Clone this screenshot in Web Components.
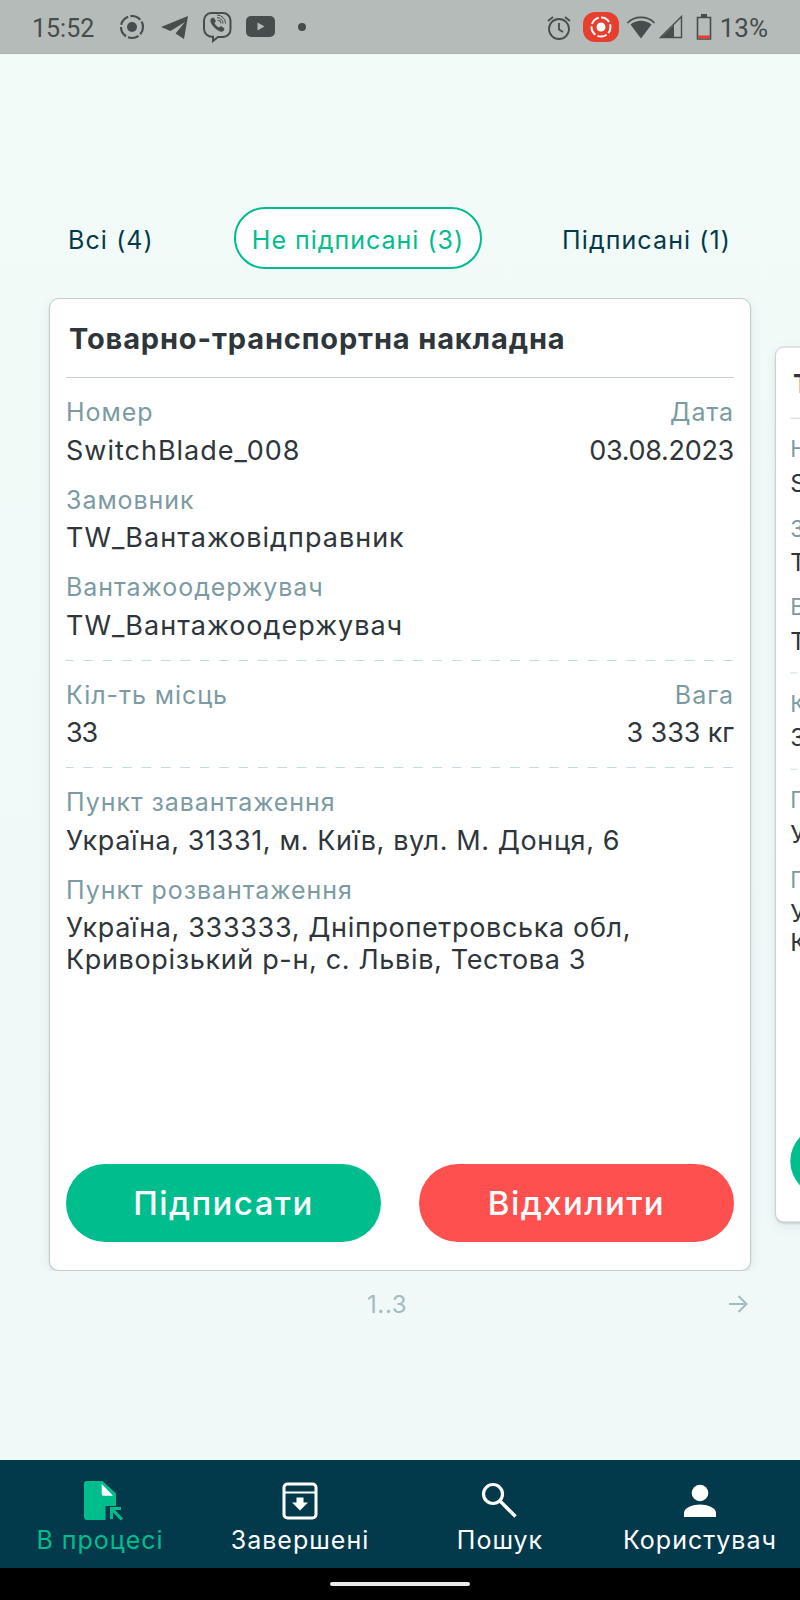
<!DOCTYPE html>
<html lang="uk">
<head>
<meta charset="utf-8">
<title>Накладні</title>
<style>
  html, body { margin: 0; padding: 0; }
  body { font-family: Inter, "Liberation Sans", sans-serif; }
</style>
</head>
<body>
<app-shell>
  <status-bar slot="top"></status-bar>
  <filter-tabs>
    <filter-tab>Всі (4)</filter-tab>
    <filter-tab active>Не підписані (3)</filter-tab>
    <filter-tab>Підписані (1)</filter-tab>
  </filter-tabs>
  <doc-carousel>
    <doc-card>
      <doc-pair><doc-field label="Номер">SwitchBlade_008</doc-field><doc-field end label="Дата" style="--ls:-.3px">03.08.2023</doc-field></doc-pair>
      <doc-field label="Замовник">TW_Вантажовідправник</doc-field>
      <doc-field label="Вантажоодержувач">TW_Вантажоодержувач</doc-field>
      <dash-line></dash-line>
      <doc-pair><doc-field label="Кіл-ть місць" style="--ls:-1.2px">33</doc-field><doc-field end label="Вага" style="--ls:-.1px">3 333 кг</doc-field></doc-pair>
      <dash-line></dash-line>
      <doc-field label="Пункт завантаження" style="--ls:.6px">Україна, 31331, м. Київ, вул. М. Донця, 6</doc-field>
      <doc-field label="Пункт розвантаження" style="--ls:.65px">Україна, 333333, Дніпропетровська обл, Криворізький р-н, с. Львів, Тестова 3</doc-field>
    </doc-card>
    <doc-card side>
      <doc-pair><doc-field label="Номер">SwitchBlade_007</doc-field><doc-field end label="Дата" style="--ls:-.3px">03.08.2023</doc-field></doc-pair>
      <doc-field label="Замовник">TW_Вантажовідправник</doc-field>
      <doc-field label="Вантажоодержувач">TW_Вантажоодержувач</doc-field>
      <dash-line></dash-line>
      <doc-pair><doc-field label="Кіл-ть місць" style="--ls:-1.2px">33</doc-field><doc-field end label="Вага" style="--ls:-.1px">3 333 кг</doc-field></doc-pair>
      <dash-line></dash-line>
      <doc-field label="Пункт завантаження" style="--ls:.6px">Україна, 31331, м. Київ, вул. М. Донця, 6</doc-field>
      <doc-field label="Пункт розвантаження" style="--ls:.65px">Україна, 333333, Дніпропетровська обл, Криворізький р-н, с. Львів, Тестова 3</doc-field>
    </doc-card>
  </doc-carousel>
  <doc-pager></doc-pager>
  <bottom-nav slot="bottom">
    <nav-item active label="В процесі">
      <svg width="40" height="40" viewBox="0 0 40 40" style="overflow:visible"><path fill="#00bd8e" d="M7 0h15.500L36 12.500V25H25.500v14H7a3 3 0 0 1-3-3V3a3 3 0 0 1 3-3z"/><path fill="#fff" d="M21.700 3v10a1.700 1.700 0 0 0 1.700 1.700H33z"/><path fill="none" stroke="#00bd8e" stroke-width="3" d="M31.500 38V27.500H41M32 28l10 10.500"/></svg>
    </nav-item>
    <nav-item label="Завершені">
      <svg width="40" height="40" viewBox="0 0 40 40"><rect x="4" y="3" width="32" height="34" rx="3.500" fill="none" stroke="#fff" stroke-width="3"/><path fill="none" stroke="#fff" stroke-width="2" d="M4 11.500h32"/><path fill="#fff" d="M16.500 16.500h7v5H28L20 29.500 12 21.500h4.500z"/></svg>
    </nav-item>
    <nav-item label="Пошук">
      <svg width="40" height="40" viewBox="0 0 40 40"><circle cx="13" cy="13" r="9.500" fill="none" stroke="#fff" stroke-width="3.200"/><path stroke="#fff" stroke-width="3.400" d="M20 20l15.500 15.500"/></svg>
    </nav-item>
    <nav-item label="Користувач">
      <svg width="40" height="40" viewBox="0 0 40 40"><circle cx="20" cy="12" r="8.300" fill="#fff"/><path fill="#fff" d="M4 36v-4c0-5.500 9-8.500 16-8.500s16 3 16 8.500v4z"/></svg>
    </nav-item>
  </bottom-nav>
  <home-bar slot="bottom"></home-bar>
</app-shell>

<script>
function make(name, css, html) {
  class El extends HTMLElement {
    constructor() {
      super()
      this._shadowRoot = this.attachShadow({ mode: 'open' })
    }
    connectedCallback() {
      const body = typeof html === 'function' ? html(this) : html
      this._shadowRoot.innerHTML = `<style>${css}</style>${body}`
    }
  }
  customElements.define(name, El)
}

make('app-shell', `
  :host{display:flex;flex-direction:column;width:800px;height:1600px;overflow:hidden;
    background:linear-gradient(#f3fbf9,#f0f8f8);color:#023a4b}
  main{flex:1;min-height:0;display:flex;flex-direction:column;padding-top:153px}
`, `<slot name="top"></slot><main><slot></slot></main><slot name="bottom"></slot>`)

make('status-bar', `
  :host{display:flex;align-items:center;height:54px;box-sizing:border-box;padding:0 0 0 32px;
    background:#b4bbb9;color:#474c4c;font:400 25px Roboto,sans-serif;border-bottom:1px solid #a9b1af}
  .time{width:87px;padding-top:3px}
  .icons{display:flex;align-items:center}
  svg{display:block;flex:none}
  .right{margin-left:auto;display:flex;align-items:center;padding-right:32px}
  .pct{margin-left:8px;font-size:26px;padding-top:3px}
`, `
  <span class="time">15:52</span>
  <div class="icons">
    <svg width="26" height="26" viewBox="0 0 26 26"><circle cx="13" cy="13" r="5" fill="#474c4c"/><circle cx="13" cy="13" r="11" fill="none" stroke="#474c4c" stroke-width="2.200" stroke-dasharray="11 2.200" stroke-dashoffset="3"/></svg>
    <svg width="29" height="26" viewBox="0 0 29 26" style="margin-left:15px"><path fill="#474c4c" d="M1 13 28 2 24 25 15.500 19.500 25 8 10.500 17z"/></svg>
    <svg width="30" height="32" viewBox="0 0 30 32" style="margin-left:13px"><path fill="none" stroke="#474c4c" stroke-width="2" d="M9 2h12a7.500 7.500 0 0 1 7.500 7.500v9A7.500 7.500 0 0 1 21 26h-5l-5 4v-4.300A8 8 0 0 1 2 18V9.500A7.500 7.500 0 0 1 9 2z"/><path fill="#474c4c" d="M9 7.500l2.500-1 2.500 3.500-1.500 2c.8 2 2.500 3.500 4.500 4.500l2-1.500 3.500 2.500-1 2.500c-1 1-2.500 1-4 .3-4-1.800-7.500-5.500-9-9.500-.3-1 0-2.300.5-3.300z"/><path fill="none" stroke="#474c4c" stroke-width="1" d="M15 6.500a6 6 0 0 1 6 6M15.500 9a3.500 3.500 0 0 1 3.500 3.500M15 4a8.500 8.500 0 0 1 8.500 8.500"/></svg>
    <svg width="29" height="21" viewBox="0 0 29 21" style="margin-left:14px"><rect width="29" height="21" rx="5" fill="#474c4c"/><path fill="#b4bbb9" d="M11.500 6.500 18.500 10.500l-7 4z"/></svg>
    <svg width="8" height="8" viewBox="0 0 8 8" style="margin-left:23px"><circle cx="4" cy="4" r="4" fill="#474c4c"/></svg>
  </div>
  <div class="right">
    <svg width="26" height="26" viewBox="0 0 26 26"><circle cx="13" cy="15" r="10" fill="none" stroke="#474c4c" stroke-width="1.800"/><path fill="none" stroke="#474c4c" stroke-width="1.800" d="M13 9v6.500l4 2.500M2 7l5-4M24 7l-5-4"/></svg>
    <svg width="36" height="30" viewBox="0 0 36 30" style="margin-left:11px"><rect width="36" height="30" rx="12" fill="#e63f2e"/><circle cx="18" cy="15" r="4.500" fill="#fff"/><circle cx="18" cy="15" r="9.500" fill="none" stroke="#fff" stroke-width="2" stroke-dasharray="9.500 2.400" stroke-dashoffset="3"/></svg>
    <svg width="30" height="26" viewBox="0 0 30 26" style="margin-left:7px"><path fill="none" stroke="#474c4c" stroke-width="1.600" d="M1.500 9C8.500 1.500 21.500 1.500 28.500 9"/><path fill="#474c4c" d="M4.500 10.500C11 5.500 19 5.500 25.500 10.500L15 24.500z"/></svg>
    <svg width="24" height="24" viewBox="0 0 24 24" style="margin-left:3px"><path fill="none" stroke="#474c4c" stroke-width="1.400" d="M1.500 22.500 22.500 1.500v21z"/><path fill="#474c4c" d="M2 23 15 10v13z"/></svg>
    <svg width="16" height="27" viewBox="0 0 16 27" style="margin-left:13px"><path fill="none" stroke="#474c4c" stroke-width="1.600" d="M1.500 4.500h13v21.500h-13z"/><path fill="#474c4c" d="M5 1h6v4H5z"/><path fill="#e63f2e" d="M2 22.500h12v3H2z"/></svg>
    <span class="pct">13%</span>
  </div>
`)

make('filter-tabs', `
  :host{display:flex;align-items:center;gap:63px;height:62px;margin-bottom:29px;padding-left:51px}
`, `<slot></slot>`)

make('filter-tab', `
  :host{display:flex;align-items:center;height:62px;box-sizing:border-box;flex:none;padding:3px 17px 0;
    font-size:25px;letter-spacing:1.100px;color:#023a4b;white-space:nowrap;border-radius:31px}
  :host([active]){background:#fff;border:2px solid #00bd8e;color:#00bd8e;padding:3px 16px 0;letter-spacing:1px}
`, `<slot></slot>`)

make('doc-carousel', `
  :host{display:flex;align-items:center;gap:24px;padding-left:49px;height:973px;flex:none;overflow:hidden}
`, `<slot></slot>`)

make('doc-card', `
  :host{display:flex;flex-direction:column;flex:none;width:702px;height:973px;box-sizing:border-box;
    background:#fff;border:1px solid #c3cfcf;border-radius:10px;padding:0 16px 28px 16px;
    box-shadow:0 1px 2px rgba(2,58,75,.14),0 3px 14px rgba(2,58,75,.08)}
  :host([side]){transform:scale(.9);transform-origin:left center}
  h2{margin:0;padding:20px 0 0 3px;box-sizing:content-box;font-size:29px;line-height:40px;font-weight:700;color:#2f363b;
    letter-spacing:.85px;height:58px;border-bottom:1px solid #c9d2d2;white-space:nowrap}
  .body{flex:1;padding-top:15px;display:flex;flex-direction:column}
  .actions{display:flex;justify-content:space-between}
  button{width:315px;height:78px;border:0;border-radius:39px;color:#fff;font:500 33px Inter,sans-serif;letter-spacing:1.400px}
  .ok{background:#00bd8e}.no{background:#ff5050}
`, `
  <h2>Товарно-транспортна накладна</h2>
  <div class="body"><slot></slot></div>
  <div class="actions"><button class="ok">Підписати</button><button class="no">Відхилити</button></div>
`)

make('doc-pair', `
  :host{display:flex;justify-content:space-between}
`, `<slot></slot>`)

make('doc-field', `
  :host{display:block;margin-bottom:14px}
  :host([end]){text-align:right}
  .l{font-size:25px;line-height:38px;color:#7c9aa2;letter-spacing:.95px}
  .v{font-size:27px;line-height:32px;margin-top:3.500px;color:#2f363b;letter-spacing:var(--ls,1px)}
`, el => `<div class="l">${el.getAttribute('label')}</div><div class="v"><slot></slot></div>`)

make('dash-line', `
  :host{display:block;height:1px;margin:4px 0 15px;
    background:linear-gradient(90deg,#c3dbe3 0 10px,transparent 10px) -2px 0/19.400px 1px repeat-x}
`, ``)

make('doc-pager', `
  :host{display:flex;align-items:center;height:34px;margin-top:16px;padding-left:367px;padding-right:52px;
    color:#a3bcc1;font-size:24px;letter-spacing:.6px}
  svg{margin-left:auto}
`, `<span>1..3</span><svg width="20" height="20" viewBox="0 0 20 20"><path fill="none" stroke="#a3bcc1" stroke-width="2" d="M1 10h17M10.500 2l8 8-8 8"/></svg>`)

make('bottom-nav', `
  :host{display:flex;height:108px;background:#023a4b;flex:none;margin-top:auto}
`, `<slot></slot>`)

make('nav-item', `
  :host{display:flex;flex-direction:column;align-items:center;box-sizing:border-box;padding-top:21px;flex:1 1 0;
    color:#fff;font-size:25px;letter-spacing:1px;white-space:nowrap}
  :host([active]){color:#00bd8e}
  .t{line-height:30px;margin-top:4px}
`, el => `<slot></slot><div class="t">${el.getAttribute('label')}</div>`)

make('home-bar', `
  :host{display:flex;align-items:center;justify-content:center;height:32px;background:#000;flex:none}
  div{width:140px;height:4px;border-radius:2px;background:#e9e9e9}
`, `<div></div>`)
</script>
</body>
</html>
